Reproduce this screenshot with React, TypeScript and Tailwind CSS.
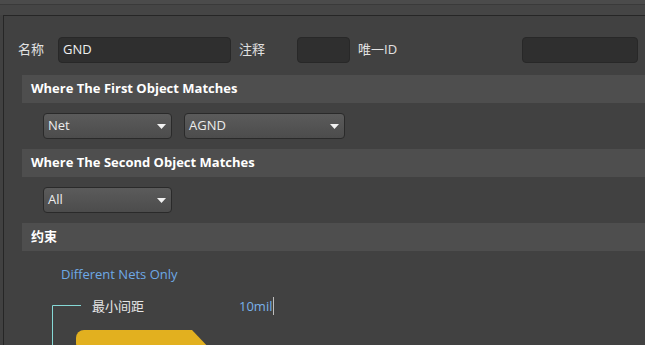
const font = {
  fontFamily: '"Open Sans", "Noto Sans CJK SC", sans-serif',
};

function Caret() {
  return (
    <svg width="9" height="5" viewBox="0 0 9 5" className="shrink-0">
      <path d="M0 0 H9 L4.5 5 Z" fill="#f2f2f2" />
    </svg>
  );
}

function Select({ value, width }: { value: string; width: string }) {
  return (
    <div
      className={`flex h-[26px] ${width} items-center justify-between rounded-[4px] border border-[#2a2a2a] bg-gradient-to-b from-[#5b5b5b] to-[#4c4c4c] pl-[4px] pr-[5px] text-[13px] text-[#ececec]`}
    >
      <span>{value}</span>
      <Caret />
    </div>
  );
}

function Field({ width, value }: { width: string; value?: string }) {
  return (
    <div
      className={`flex h-[26px] ${width} items-center rounded-[4px] border border-[#282828] bg-[#2f2f2f] pl-[4px] text-[13px] text-[#f0f0f0]`}
    >
      {value}
    </div>
  );
}

function Header({ title }: { title: string }) {
  return (
    <div className="flex h-[28px] items-center bg-[#4e4e4e] pl-[9px] text-[13px] font-bold text-white">
      {title}
    </div>
  );
}

export default function App() {
  return (
    <div
      className="flex h-[345px] w-[645px] flex-col overflow-hidden bg-[#414141]"
      style={font}
    >
      <div className="h-[5px] shrink-0 border-b border-[#3a3a3a] bg-[#4b4b4b]" />
      <div className="h-[10px] shrink-0 bg-[#454545]" />

      <div className="ml-[3px] flex flex-1 flex-col border-l border-t border-[#262626] bg-[#414141] pt-[21px]">
        {/* name / comment / id */}
        <div className="flex items-center pl-[14px] text-[13px] text-[#e2e2e2]">
          <span className="w-[40px]">名称</span>
          <Field width="w-[173px]" value="GND" />
          <span className="ml-[8px] w-[58px]">注释</span>
          <Field width="w-[53px]" />
          <span className="ml-[8px] w-[164px]">唯一ID</span>
          <Field width="w-[116px]" />
        </div>

        <div className="ml-[18px] mt-[12px] flex flex-col">
          <Header title="Where The First Object Matches" />
          <div className="flex gap-[12px] py-[10px] pl-[21px]">
            <Select value="Net" width="w-[129px]" />
            <Select value="AGND" width="w-[161px]" />
          </div>

          <Header title="Where The Second Object Matches" />
          <div className="flex py-[10px] pl-[21px]">
            <Select value="All" width="w-[129px]" />
          </div>

          <Header title="约束" />

          <div className="relative h-[100px]">
            <svg
              className="absolute left-0 top-0"
              width="300"
              height="100"
              viewBox="0 0 300 100"
            >
              <path d="M30.5 100 V54.5 H59" stroke="#86d9d6" strokeWidth="1" fill="none" />
              <path
                d="M62 79 H170 L190 100 H62 A8 8 0 0 1 54 92 V87 A8 8 0 0 1 62 79 Z"
                fill="#e2b01f"
              />
            </svg>
            <div className="relative pl-[39px] pt-[14px] text-[13px] text-[#6ea9e6]">
              Different Nets Only
            </div>
            <div className="relative mt-[12px] flex items-center text-[13px]">
              <span className="ml-[70px] w-[147px] text-[#e6e6e6]">最小间距</span>
              <span className="text-[#79b1ea]">10mil</span>
              <span className="ml-[1px] h-[18px] w-px bg-[#bdbdbd]" />
            </div>
          </div>
        </div>
      </div>
    </div>
  );
}
